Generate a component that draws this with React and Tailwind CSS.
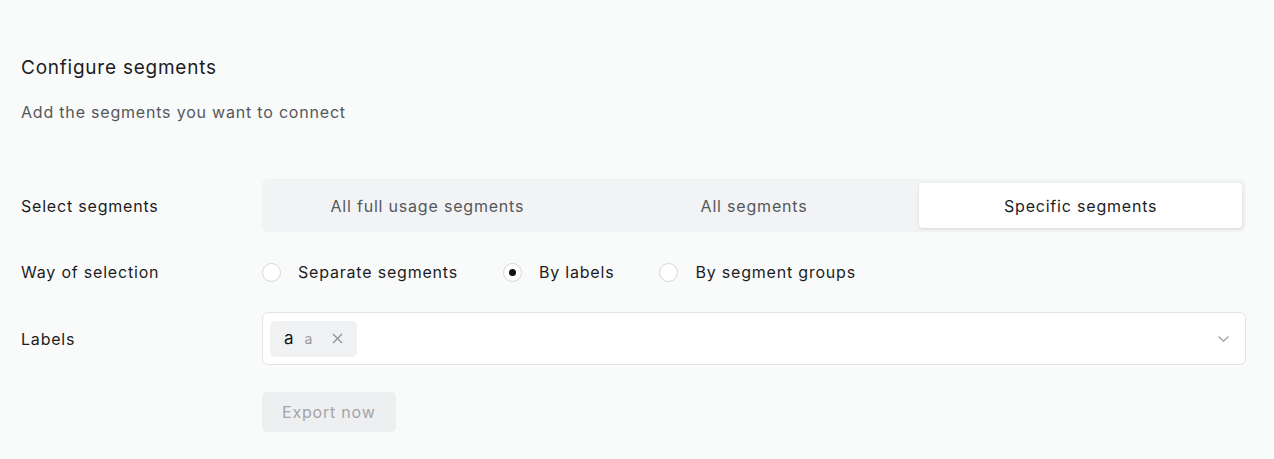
import React from 'react';

const Radio = ({ checked, label }) => (
    <label className="flex items-center gap-[17px] cursor-pointer">
        <span className="w-[19px] h-[19px] rounded-full border border-[#d6d7d9] bg-white flex items-center justify-center">
            {checked && <span className="w-[7px] h-[7px] rounded-full bg-[#111]" />}
        </span>
        <span className="text-[16px] text-[#1d1d1f]">{label}</span>
    </label>
);

const App = () => {
    const tabs = ['All full usage segments', 'All segments', 'Specific segments'];
    const active = 2;

    return (
        <div className="min-h-[459px] bg-[#f9fafa] px-[21px] pt-[56px] font-['Inter',sans-serif] tracking-[0.05em] text-[#1d1d1f]">
            {/* Heading */}
            <h2 className="text-[19px] leading-6 tracking-[0.04em] text-[#1d1d1f]">Configure segments</h2>
            <p className="mt-[20px] text-[16px] leading-6 text-[#55575a]">Add the segments you want to connect</p>

            <div className="mt-[55px] grid grid-cols-[241px_984px] items-center gap-y-[14px]">
                {/* Select segments */}
                <div className="text-[16px]">Select segments</div>
                <div className="h-[53px] bg-[#f2f3f5] rounded-[6px] p-[4px] grid grid-cols-3 gap-[4px]">
                    {tabs.map((t, i) => (
                        <button
                            key={t}
                            className={
                                i === active
                                    ? 'rounded-[4px] bg-white text-[16px] tracking-[0.05em] text-[#1d1d1f] shadow-[0_1px_3px_rgba(0,0,0,0.12)]'
                                    : 'rounded-[4px] text-[16px] tracking-[0.05em] text-[#55575a]'
                            }
                        >
                            {t}
                        </button>
                    ))}
                </div>

                {/* Way of selection */}
                <div className="text-[16px] h-[52px] flex items-center">Way of selection</div>
                <div className="flex items-center gap-[45px] h-[52px]">
                    <Radio label="Separate segments" />
                    <Radio checked label="By labels" />
                    <Radio label="By segment groups" />
                </div>

                {/* Labels */}
                <div className="text-[16px]">Labels</div>
                <div className="h-[53px] bg-white border border-[#e3e4e6] rounded-[6px] flex items-center justify-between pl-[7px] pr-[16px]">
                    <div className="h-[36px] bg-[#f0f1f3] rounded-[5px] flex items-center pl-[14px] pr-[14px]">
                        <span className="text-[17px] tracking-normal text-[#111]">a</span>
                        <span className="ml-[11px] text-[14px] tracking-normal text-[#9a9b9d]">a</span>
                        <svg className="ml-[20px]" width="11" height="11" viewBox="0 0 11 11" fill="none">
                            <path d="M1 1L10 10M10 1L1 10" stroke="#8e8f91" strokeWidth="1.2" />
                        </svg>
                    </div>
                    <svg width="11" height="6" viewBox="0 0 11 6" fill="none">
                        <path d="M0.5 0.5L5.5 5.2L10.5 0.5" stroke="#9a9b9d" strokeWidth="1.2" />
                    </svg>
                </div>

                {/* Export */}
                <div />
                <div className="pt-[13px]">
                    <button className="h-[40px] px-[20px] rounded-[5px] bg-[#eeeff1] text-[16px] tracking-[0.05em] text-[#a3a4a6]">
                        Export now
                    </button>
                </div>
            </div>
        </div>
    );
};

export default App;
